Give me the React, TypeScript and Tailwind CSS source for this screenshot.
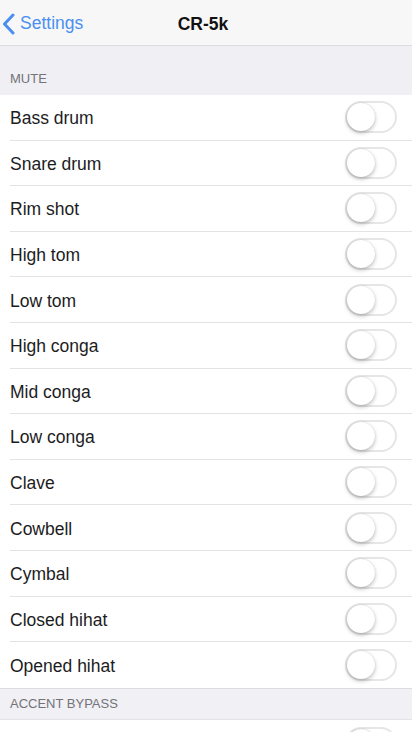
import React from "react";

const items = [
  "Bass drum",
  "Snare drum",
  "Rim shot",
  "High tom",
  "Low tom",
  "High conga",
  "Mid conga",
  "Low conga",
  "Clave",
  "Cowbell",
  "Cymbal",
  "Closed hihat",
  "Opened hihat",
];

function Toggle() {
  return (
    <div className="relative w-[52px] h-[32px] rounded-full border-2 border-[#e6e6e9] bg-white shrink-0">
      <div className="absolute left-0 top-0 w-[28px] h-[28px] rounded-full bg-white shadow-[0_2px_4px_rgba(0,0,0,0.25),0_0_1px_rgba(0,0,0,0.2)]" />
    </div>
  );
}

function Row({ label, last }: { label: string; last?: boolean }) {
  return (
    <div className="h-[45.6px] flex flex-col bg-white">
      <div className="flex-1 flex items-center justify-between pl-[10px] pr-[15px]">
        <span className="text-[17.5px] text-[#1c1c1e] pt-[2px]">{label}</span>
        <Toggle />
      </div>
      {!last && <div className="h-px bg-[#e3e3e6] ml-[10px]" />}
    </div>
  );
}

export default function App() {
  return (
    <div
      className="w-[412px] h-[732px] overflow-hidden bg-[#efeff4]"
      style={{ fontFamily: '"Liberation Sans", Arial, sans-serif' }}
    >
      <div className="relative h-[46px] bg-[#f7f7f8] border-b border-[#dcdce0] flex items-center justify-center pt-[3px] pr-[6px]">
        <div className="absolute left-[2px] top-0 h-full flex items-center gap-[5px] text-[#4a8ff0] pt-[2px]">
          <svg width="13" height="22" viewBox="0 0 13 22" fill="none">
            <path d="M11 2 L2.5 11 L11 20" stroke="#4a8ff0" strokeWidth="3" strokeLinecap="round" strokeLinejoin="round" />
          </svg>
          <span className="text-[17.5px]">Settings</span>
        </div>
        <span className="text-[17.5px] font-bold text-[#111]">CR-5k</span>
      </div>
      <div className="h-[49px] flex items-end pl-[10px] pb-[7px]">
        <span className="text-[13px] text-[#737378]">MUTE</span>
      </div>
      <div className="border-b border-[#dcdce0]">
        {items.map((it, i) => (
          <Row key={it} label={it} last={i === items.length - 1} />
        ))}
      </div>
      <div className="h-[30px] flex items-center pl-[10px] bg-[#f0f0f5] pt-[1px]">
        <span className="text-[13px] text-[#737378]">ACCENT BYPASS</span>
      </div>
      <div className="border-t border-[#e3e3e6]">
        <Row label="" last />
      </div>
    </div>
  );
}
